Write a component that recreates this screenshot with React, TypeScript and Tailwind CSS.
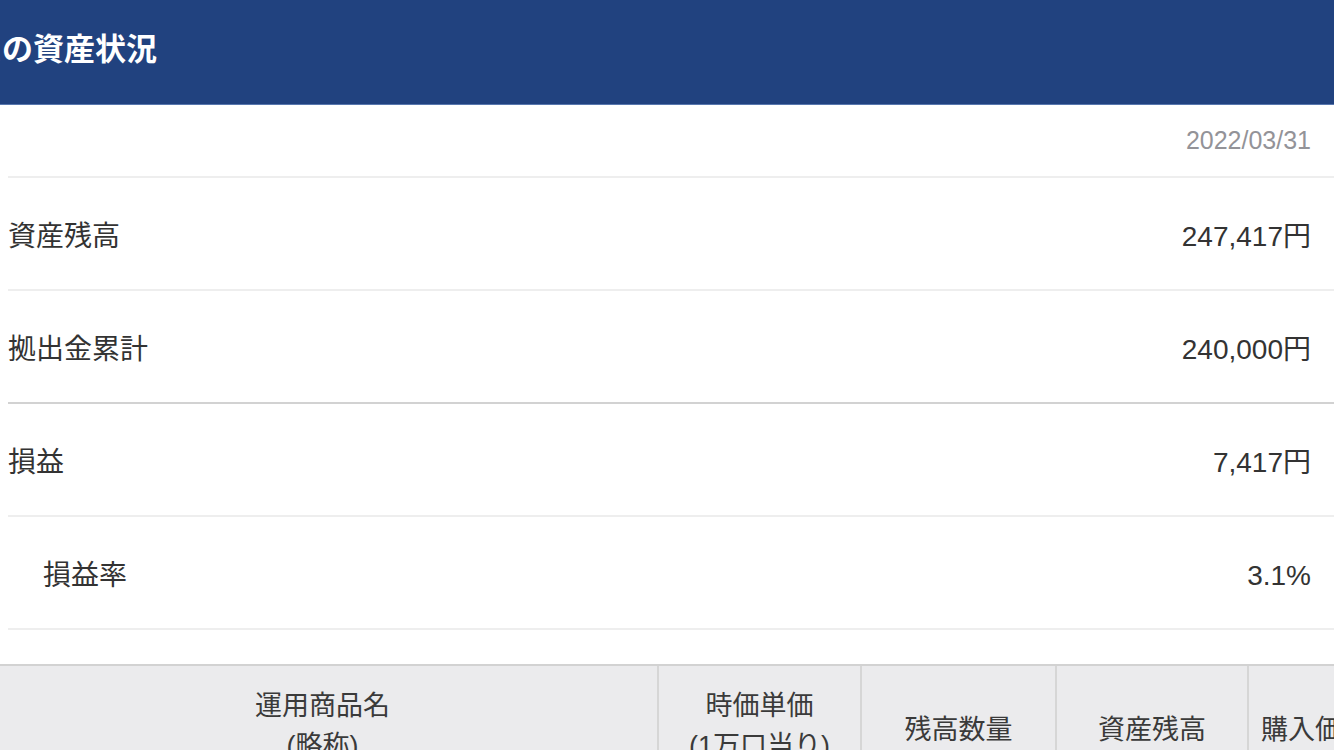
import React from "react";

const font = { fontFamily: '"Liberation Sans", "Noto Sans CJK JP", sans-serif' };

function Row({ label, value, indent, border }: { label: string; value: string; indent?: boolean; border: string }) {
  return (
    <div className={`ml-[8px] flex h-[113px] items-center justify-between pr-[23px] pt-[6px] ${border}`}>
      <span className={`text-[28px] text-[#333333] ${indent ? "pl-[35px]" : ""}`}>{label}</span>
      <span className="text-[28px] text-[#333333]">{value}</span>
    </div>
  );
}

export default function App() {
  return (
    <div className="w-[1334px] h-[750px] overflow-hidden bg-white" style={font}>
      <div className="h-[105px] bg-[#21427f] border-b border-[#5877ae] flex items-center overflow-hidden">
        <span className="ml-[-91px] whitespace-nowrap text-[31px] font-bold text-white pb-[4px]">あなたの資産状況</span>
      </div>
      <div className="ml-[8px] flex h-[73px] items-center justify-end pr-[23px] border-b-2 border-[#eeeeee]">
        <span className="text-[25px] text-[#939398]">2022/03/31</span>
      </div>
      <Row label="資産残高" value="247,417円" border="border-b-2 border-[#eeeeee]" />
      <Row label="拠出金累計" value="240,000円" border="border-b-2 border-[#d2d2d2]" />
      <Row label="損益" value="7,417円" border="border-b-2 border-[#eeeeee]" />
      <Row label="損益率" value="3.1%" indent border="border-b-2 border-[#eeeeee]" />
      <div className="h-[34px]" />
      <div className="flex border-t-2 border-[#d2d2d2] bg-[#ebebed] text-[27px] text-[#3a3a3a] h-[120px]">
        <div className="w-[659px] shrink-0 border-r-2 border-[#d6d6d6] flex flex-col items-center pt-[20px] pr-[12px] leading-[40px]">
          <span>運用商品名</span>
          <span>(略称)</span>
        </div>
        <div className="w-[203px] shrink-0 border-r-2 border-[#d6d6d6] flex flex-col items-center pt-[20px] leading-[40px]">
          <span>時価単価</span>
          <span>(1万口当り)</span>
        </div>
        <div className="w-[195px] shrink-0 border-r-2 border-[#d6d6d6] flex justify-center pt-[44px] leading-[40px]">
          <span>残高数量</span>
        </div>
        <div className="w-[192px] shrink-0 border-r-2 border-[#d6d6d6] flex justify-center pt-[44px] leading-[40px]">
          <span>資産残高</span>
        </div>
        <div className="w-[200px] shrink-0 pl-[12px] pt-[44px] leading-[40px] whitespace-nowrap">
          <span>購入価額</span>
        </div>
      </div>
    </div>
  );
}
